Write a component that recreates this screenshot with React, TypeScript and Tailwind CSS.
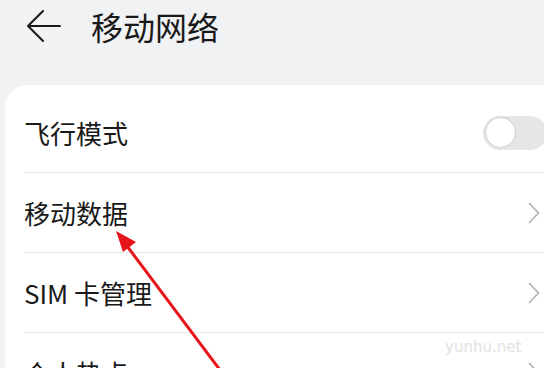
import React from "react";

const Chevron = () => (
  <svg width="12" height="22" viewBox="0 0 12 22" fill="none">
    <path d="M1.5 1.5 L10.5 11 L1.5 20.5" stroke="#b4b4b4" strokeWidth="1.8" strokeLinecap="round" strokeLinejoin="round" />
  </svg>
);

export default function App() {
  const font = { fontFamily: '"Noto Sans CJK SC", "Noto Sans", sans-serif' };
  return (
    <div className="relative w-[544px] h-[368px] overflow-hidden bg-[#f1f2f4] text-[#191919]" style={font}>
      <div className="flex items-center h-[52px] pl-[27px]">
        <svg width="34" height="32" viewBox="0 0 34 32" fill="none">
          <path d="M16 1 L1 16 L16 31 M1 16 H33" stroke="#1a1a1a" strokeWidth="2" strokeLinecap="round" strokeLinejoin="round" />
        </svg>
        <span className="ml-[30px] text-[32px] leading-none font-normal">移动网络</span>
      </div>
      <div className="mt-[33px] ml-[5px] w-[580px] rounded-[22px] bg-white pt-[8px]">
        <div className="flex items-center justify-between h-[79px] pl-[19px] pr-[28px]">
          <span className="text-[26px] leading-none">飞行模式</span>
          <div className="mr-[10px] w-[64px] h-[34px] rounded-full bg-[#e6e6e6] flex items-center pl-[2px]">
            <div className="w-[31px] h-[31px] rounded-full bg-white border border-[#d0d0d0]" />
          </div>
        </div>
        <div className="ml-[19px] border-t border-[#e8e8e8]" />
        <div className="flex items-center justify-between h-[79px] pl-[19px] pr-[45px]">
          <span className="text-[26px] leading-none">移动数据</span>
          <Chevron />
        </div>
        <div className="ml-[19px] border-t border-[#e8e8e8]" />
        <div className="flex items-center justify-between h-[79px] pl-[19px] pr-[45px]">
          <span className="text-[26px] leading-none">SIM 卡管理</span>
          <Chevron />
        </div>
        <div className="ml-[19px] border-t border-[#e8e8e8]" />
        <div className="flex items-center justify-between h-[79px] pl-[19px] pr-[45px]">
          <span className="text-[26px] leading-none">个人热点</span>
          <Chevron />
        </div>
      </div>
      <div className="absolute left-[445px] top-[336px] text-[15px] text-[#e2e2e2]" style={{ fontFamily: '"DejaVu Sans", sans-serif' }}>
        yunhu.net
      </div>
      <svg className="absolute left-0 top-0" width="544" height="368" viewBox="0 0 544 368">
        <line x1="226" y1="378" x2="127" y2="246" stroke="#e8141b" strokeWidth="3" />
        <polygon points="116,231 136,242 123,252" fill="#e8141b" />
      </svg>
    </div>
  );
}
